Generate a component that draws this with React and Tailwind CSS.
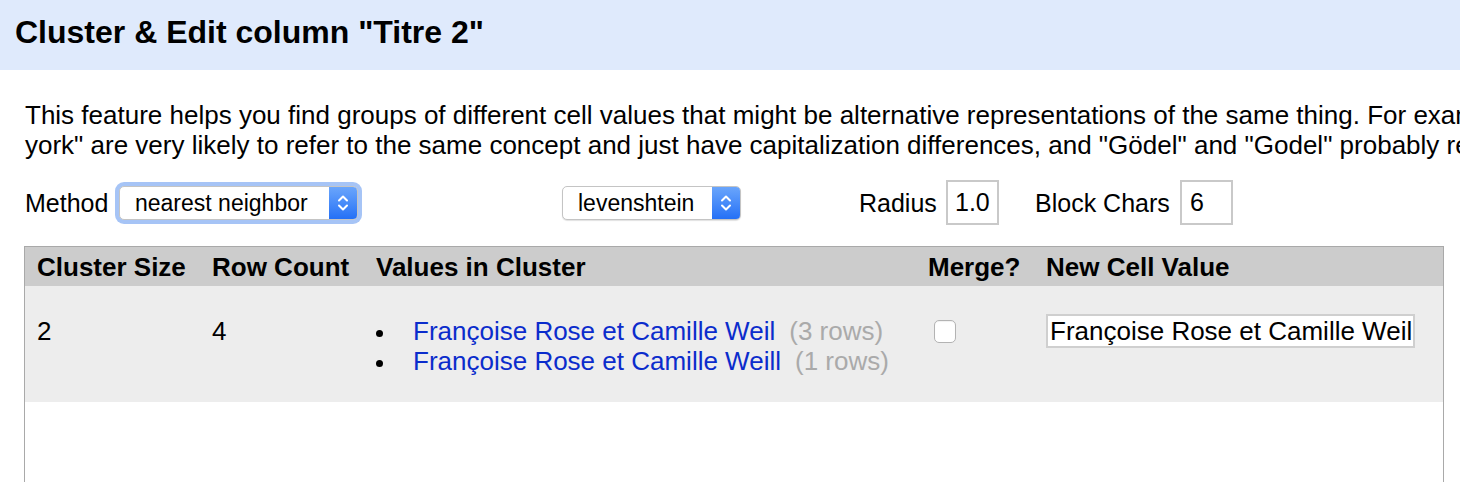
const rows = [
  {
    size: 2,
    count: 4,
    values: [
      { text: "Françoise Rose et Camille Weil", rows: 3 },
      { text: "Françoise Rose et Camille Weill", rows: 1 },
    ],
    newValue: "Françoise Rose et Camille Weil",
  },
];

function Chevrons() {
  return (
    <svg width="12" height="18" viewBox="0 0 12 18" fill="none" stroke="white" strokeWidth="2" strokeLinecap="round" strokeLinejoin="round">
      <path d="M2 6.5 L6 2.5 L10 6.5" />
      <path d="M2 11.5 L6 15.5 L10 11.5" />
    </svg>
  );
}

function Select({ value, width, focused }) {
  return (
    <div
      className={`flex h-[34px] items-stretch rounded-[5px] border border-[#c4c4c4] bg-white shadow-[0_1px_1px_rgba(0,0,0,0.12)] ${
        focused ? "ring-4 ring-[#a6c4f6]" : ""
      } ${width}`}
    >
      <div className="flex-1 pl-[15px] text-[23px] leading-[32px] text-black">{value}</div>
      <div className="flex w-[28px] items-center justify-center rounded-r-[4px] bg-gradient-to-b from-[#6aa5fb] to-[#2470f6]">
        <Chevrons />
      </div>
    </div>
  );
}

export default function App() {
  return (
    <div className="h-screen w-full overflow-hidden bg-white font-['Liberation_Sans',Arial,sans-serif] text-black">
      {/* Title bar */}
      <div className="h-[70px] bg-[#dfeafc] pl-[15px] pt-[14px]">
        <h1 className="text-[32px] font-bold leading-[36px]">Cluster &amp; Edit column "Titre 2"</h1>
      </div>

      <div className="pl-[25px] pt-[30px]">
        <p className="whitespace-nowrap text-[26px] leading-[30px]">
          This feature helps you find groups of different cell values that might be alternative representations of the same thing. For example, the two strings "New York" and "new
          <br />
          york" are very likely to refer to the same concept and just have capitalization differences, and "Gödel" and "Godel" probably refer to the same person.
        </p>

        {/* Controls */}
        <div className="mt-[20px] flex h-[45px] items-center text-[25px] leading-[28px]">
          <span className="w-[94px]">Method</span>
          <Select value="nearest neighbor" width="w-[239px]" focused />
          <div className="ml-[204px]">
            <Select value="levenshtein" width="w-[179px]" />
          </div>
          <span className="ml-[118px] w-[87px]">Radius</span>
          <input
            readOnly
            value="1.0"
            className="h-[45px] w-[53px] border-2 border-[#c9c9c9] bg-white pl-[7px] text-[25px] outline-none"
          />
          <span className="ml-[36px] w-[145px]">Block Chars</span>
          <input
            readOnly
            value="6"
            className="h-[45px] w-[53px] border-2 border-[#c9c9c9] bg-white pl-[8px] text-[25px] outline-none"
          />
        </div>
      </div>

      {/* Cluster table */}
      <div className="ml-[24px] mt-[21px] h-[400px] w-[1420px] border border-[#a9a9a9] bg-white">
        <table className="w-full table-fixed border-collapse text-[26px] leading-[30px]">
          <colgroup>
            <col className="w-[175px]" />
            <col className="w-[164px]" />
            <col className="w-[552px]" />
            <col className="w-[118px]" />
            <col />
          </colgroup>
          <thead>
            <tr className="bg-[#cccccc] text-left">
              <th className="pb-[4px] pl-[12px] pt-[5px] font-bold">Cluster Size</th>
              <th className="pb-[4px] pl-[12px] pt-[5px] font-bold">Row Count</th>
              <th className="pb-[4px] pl-[12px] pt-[5px] font-bold">Values in Cluster</th>
              <th className="pb-[4px] pl-[12px] pt-[5px] font-bold">Merge?</th>
              <th className="pb-[4px] pl-[12px] pt-[5px] font-bold">New Cell Value</th>
            </tr>
          </thead>
          <tbody>
            {rows.map((r, i) => (
              <tr key={i} className="bg-[#ededed]">
                <td className="pl-[12px] pt-[30px] align-top">{r.size}</td>
                <td className="pl-[12px] pt-[30px] align-top">{r.count}</td>
                <td className="pl-[12px] pt-[4px] align-top">
                  <ul className="my-[26px]">
                    {r.values.map((v) => (
                      <li key={v.text} className="flex items-center whitespace-nowrap">
                        <span className="mr-[30px] h-[7px] w-[7px] translate-y-[2px] rounded-full bg-black" />
                        <a className="text-[#0b2ccc]">{v.text}</a>
                        <span className="ml-[14px] text-[#aaaaaa]">({v.rows} rows)</span>
                      </li>
                    ))}
                  </ul>
                </td>
                <td className="pl-[12px] pt-[34px] align-top">
                  <input
                    type="checkbox"
                    className="ml-[6px] block h-[23px] w-[22px] appearance-none rounded-[5px] border border-[#b3b3b3] bg-white shadow-[inset_0_1px_1px_rgba(0,0,0,0.06)]"
                  />
                </td>
                <td className="pl-[12px] pt-[28px] align-top">
                  <input
                    readOnly
                    value={r.newValue}
                    className="block h-[34px] w-[369px] border-2 border-[#cfcfcf] bg-white pl-[2px] pr-0 text-[26px] leading-[30px] outline-none"
                  />
                </td>
              </tr>
            ))}
          </tbody>
        </table>
      </div>
    </div>
  );
}
